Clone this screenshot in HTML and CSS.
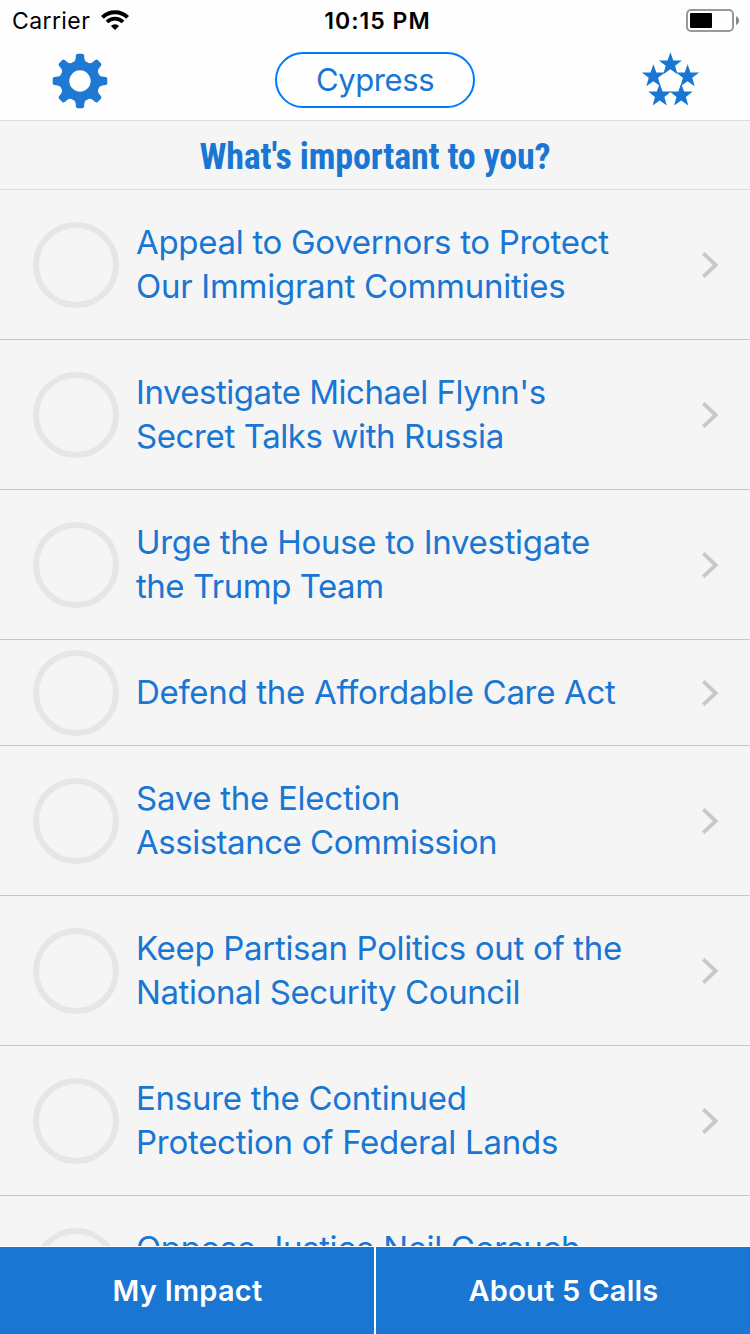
FILE: index.html
```html
<!DOCTYPE html>
<html lang="en">
<head>
<meta charset="utf-8">
<title>5 Calls</title>
<link rel="stylesheet" href="styles.css">
</head>
<body>
<svg class="defs" aria-hidden="true">
  <symbol id="chevron" viewBox="0 0 20 28"><path d="M3.3 2.3 15.7 14 3.3 25.7" fill="none" stroke="#c7c7cc" stroke-width="3.8"/></symbol>
  <path id="tooth" d="M-8.3-18Q-4.8-19.3-4.4-22.2L-4.1-25.6Q-3.8-27.3-2.3-27.3H2.3Q3.8-27.3 4.1-25.6L4.4-22.2Q4.8-19.3 8.3-18L5-11H-5Z"/>
  <path id="star" d="M0-12 2.9-3.9H11.5L4.7 1.45 7.1 9.9 0 4.9-7.1 9.9-4.7 1.45-11.5-3.9H-2.9Z"/>
</svg>
<div class="screen">
  <header class="top">
    <div class="status">
      <div class="carrier">
        <span>Carrier</span>
        <svg class="wifi" viewBox="0 0 30 22">
          <g fill="none" stroke="#000"><path d="M2.4 8.4a17.8 17.8 0 0 1 25.2 0" stroke-width="4"/><path d="M7 13a11.3 11.3 0 0 1 16 0" stroke-width="3.8"/></g>
          <path d="M15 21 10.9 16.9a5.8 5.8 0 0 1 8.2 0Z"/>
        </svg>
      </div>
      <time class="clock">10:15 PM</time>
      <svg class="battery" viewBox="0 0 54 24">
        <rect x="1" y="1" width="46" height="21" rx="4" fill="none" stroke="#999" stroke-width="2"/>
        <rect x="4" y="4" width="22" height="15" rx="1" fill="#000"/>
        <path d="M50 7.3Q53 8.5 53 11.6T50 16Z" fill="#888"/>
      </svg>
    </div>
    <nav class="nav">
      <svg class="nav-icon" viewBox="0 0 64 64">
        <g fill="#1f78d1" transform="translate(32 33)">
          <circle r="15.2" fill="none" stroke="#1f78d1" stroke-width="9"/>
          <use href="#tooth"/><use href="#tooth" transform="rotate(45)"/><use href="#tooth" transform="rotate(90)"/><use href="#tooth" transform="rotate(135)"/><use href="#tooth" transform="rotate(180)"/><use href="#tooth" transform="rotate(225)"/><use href="#tooth" transform="rotate(270)"/><use href="#tooth" transform="rotate(315)"/>
        </g>
      </svg>
      <button class="location">Cypress</button>
      <svg class="nav-icon" viewBox="0 0 64 64">
        <g fill="#1976d2">
          <use href="#star" x="32.4" y="16.3"/><use href="#star" x="15.4" y="28.3"/><use href="#star" x="49.6" y="28.3"/><use href="#star" x="21.7" y="47.5"/><use href="#star" x="43.2" y="47.5"/>
        </g>
      </svg>
    </nav>
  </header>
  <h1 class="title">What's important to you?</h1>
  <ul class="issues">
    <li class="issue"><i class="check"></i><p><span>Appeal to Governors to Protect</span><span class="loose">Our Immigrant Communities</span></p><svg class="chevron"><use href="#chevron"/></svg></li>
    <li class="issue"><i class="check"></i><p><span class="tight">Investigate Michael Flynn's</span><span class="snug">Secret Talks with Russia</span></p><svg class="chevron"><use href="#chevron"/></svg></li>
    <li class="issue"><i class="check"></i><p><span>Urge the House to Investigate</span><span class="tight">the Trump Team</span></p><svg class="chevron"><use href="#chevron"/></svg></li>
    <li class="issue"><i class="check"></i><p class="single"><span>Defend the Affordable Care Act</span></p><svg class="chevron"><use href="#chevron"/></svg></li>
    <li class="issue"><i class="check"></i><p><span class="loose">Save the Election</span><span class="tight">Assistance Commission</span></p><svg class="chevron"><use href="#chevron"/></svg></li>
    <li class="issue"><i class="check"></i><p><span>Keep Partisan Politics out of the</span><span class="snug">National Security Council</span></p><svg class="chevron"><use href="#chevron"/></svg></li>
    <li class="issue"><i class="check"></i><p><span class="loose">Ensure the Continued</span><span class="loose">Protection of Federal Lands</span></p><svg class="chevron"><use href="#chevron"/></svg></li>
    <li class="issue"><i class="check"></i><p><span class="snug">Oppose Justice Neil Gorsuch</span><span>&nbsp;</span></p><svg class="chevron"><use href="#chevron"/></svg></li>
  </ul>
  <footer class="tabs">
    <button class="tab">My Impact</button>
    <button class="tab">About 5 Calls</button>
  </footer>
</div>
</body>
</html>
```
FILE: styles.css
```css
* { box-sizing: border-box; margin: 0; padding: 0; }
body { font-family: Inter, "Liberation Sans", sans-serif; background: #f5f5f5; }
button { font: inherit; border: 0; background: none; }
svg { display: block; }
.defs { position: absolute; width: 0; height: 0; }

.screen { display: flex; flex-direction: column; width: 750px; height: 1334px; overflow: hidden; }

.top { flex: none; height: 121px; background: #fefefe; border-bottom: 1px solid #dcdcdc; }
.status { display: grid; grid-template-columns: 1fr auto 1fr; align-items: center; height: 40px; padding: 1px 10px 0 12px; font-size: 23px; line-height: 40px; color: #000; }
.carrier { display: flex; align-items: center; gap: 10px; letter-spacing: .4px; }
.wifi { width: 30px; height: 22px; margin-top: -3px; }
.clock { font-weight: 600; letter-spacing: 1px; padding-left: 3px; }
.battery { justify-self: end; width: 54px; height: 24px; }
.nav { display: flex; justify-content: space-between; align-items: center; height: 80px; padding: 0 48px; }
.nav-icon { width: 64px; height: 64px; }
.location { width: 200px; height: 56px; padding-bottom: 2px; border: 2px solid #007aff; border-radius: 28px; font-size: 31px; letter-spacing: -.4px; color: #1976d2; }

.title { flex: none; height: 69px; padding-top: 3px; border-bottom: 1px solid #dcdcdc; text-align: center; font: 700 36px/66px "Roboto Condensed", Roboto, sans-serif; font-stretch: 75%; letter-spacing: -.17px; color: #1976d2; }

.issues { flex: 1; min-height: 0; overflow: hidden; list-style: none; }
.issue { display: flex; align-items: center; min-height: 106px; padding: 0 30px 0 33px; box-shadow: inset 0 -1px #c8c8c8; }
.check { flex: none; width: 86px; height: 86px; border: 6px solid #e6e6e6; border-radius: 50%; }
.issue p { flex: 1; padding: 30px 0 32px 17px; font-size: 33px; line-height: 44px; letter-spacing: -.31px; color: #1976d2; }
.issue .single { padding-top: 0; padding-bottom: 2px; }
.issue span { display: block; }
.issue .loose { letter-spacing: -.27px; }
.issue .snug { letter-spacing: -.4px; }
.issue .tight { letter-spacing: -.48px; }
.chevron { flex: none; width: 20px; height: 28px; }

.tabs { flex: none; display: grid; grid-template-columns: 374px 374px; gap: 2px; height: 88px; border-top: 1px solid #fff; background: #fff; }
.tab { padding-left: 1px; background: #1976d2; color: #fff; font-size: 29px; font-weight: 600; letter-spacing: .25px; }
```
